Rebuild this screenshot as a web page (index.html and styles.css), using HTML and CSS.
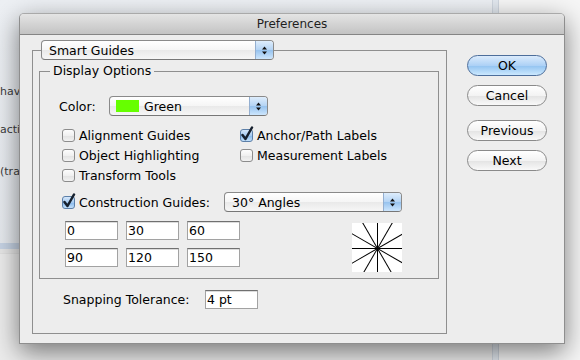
FILE: index.html
```html
<!DOCTYPE html>
<html lang="en">
  <head>
    <meta charset="UTF-8" />
    <meta name="viewport" content="width=device-width, initial-scale=1.0" />
    <title>Preferences</title>
    <link rel="stylesheet" href="styles.css">
  </head>
  <body>
    <div class="desktop">
      <div class="back-window">
        <p class="back-line line-1">havior</p>
        <p class="back-line line-2">active</p>
        <p class="back-line line-3">(transform)</p>
        <div class="back-band"></div>
        <div class="back-list"></div>
      </div>
      <div class="back-strip"></div>
      <div class="back-panel"></div>

      <div class="dialog">
        <div class="titlebar">Preferences</div>
        <div class="dialog-body">
          <fieldset class="group outer-group">
            <legend class="pane-legend">
              <div class="popup pane-popup">
                <span class="popup-text">Smart Guides</span>
                <span class="popup-arrows">
                  <svg width="7" height="11" viewBox="0 0 7 11"><path d="M3.5 1.5L6 4.5H1Z M3.5 9.5L6 6.5H1Z" /></svg>
                </span>
              </div>
            </legend>

            <fieldset class="group inner-group">
              <legend class="group-title">Display Options</legend>
              <div class="display-body">
                <div class="color-row">
                  <span class="field-label">Color:</span>
                  <div class="popup color-popup">
                    <span class="swatch"></span>
                    <span class="popup-text">Green</span>
                    <span class="popup-arrows">
                      <svg width="7" height="11" viewBox="0 0 7 11"><path d="M3.5 1.5L6 4.5H1Z M3.5 9.5L6 6.5H1Z" /></svg>
                    </span>
                  </div>
                </div>

                <div class="checks">
                  <label class="check"><span class="box"></span>Alignment Guides</label>
                  <label class="check"><span class="box checked"><svg class="tick" width="14" height="16" viewBox="0 0 14 16"><path d="M2.5 9L5.5 13L12 1.5" /></svg></span>Anchor/Path Labels</label>
                  <label class="check"><span class="box"></span>Object Highlighting</label>
                  <label class="check"><span class="box"></span>Measurement Labels</label>
                  <label class="check"><span class="box"></span>Transform Tools</label>
                </div>

                <div class="construction-row">
                  <label class="check construction-check"><span class="box checked"><svg class="tick" width="14" height="16" viewBox="0 0 14 16"><path d="M2.5 9L5.5 13L12 1.5" /></svg></span>Construction Guides:</label>
                  <div class="popup angle-popup">
                    <span class="popup-text">30° Angles</span>
                    <span class="popup-arrows">
                      <svg width="7" height="11" viewBox="0 0 7 11"><path d="M3.5 1.5L6 4.5H1Z M3.5 9.5L6 6.5H1Z" /></svg>
                    </span>
                  </div>
                </div>

                <div class="angles-row">
                  <div class="angle-fields">
                    <span class="text-field">0</span>
                    <span class="text-field">30</span>
                    <span class="text-field">60</span>
                    <span class="text-field">90</span>
                    <span class="text-field">120</span>
                    <span class="text-field">150</span>
                  </div>
                  <svg class="angle-preview" width="50" height="49" viewBox="0 0 50 49">
                    <rect width="50" height="49" fill="#fff" />
                    <g transform="translate(25.5 25.5)" stroke="#000" stroke-width="1">
                      <line x1="-40" y1="0" x2="40" y2="0" />
                      <line x1="0" y1="-40" x2="0" y2="40" />
                      <line x1="-40" y1="0" x2="40" y2="0" transform="rotate(30)" />
                      <line x1="-40" y1="0" x2="40" y2="0" transform="rotate(60)" />
                      <line x1="-40" y1="0" x2="40" y2="0" transform="rotate(120)" />
                      <line x1="-40" y1="0" x2="40" y2="0" transform="rotate(150)" />
                    </g>
                  </svg>
                </div>
              </div>
            </fieldset>

            <div class="snap-row">
              <span class="snap-label">Snapping Tolerance:</span>
              <span class="text-field">4 pt</span>
            </div>
          </fieldset>

          <div class="buttons">
            <div class="btn btn-default">OK</div>
            <div class="btn">Cancel</div>
            <div class="btn btn-gap">Previous</div>
            <div class="btn">Next</div>
          </div>
        </div>
      </div>
    </div>
  </body>
</html>
```

FILE: styles.css
```css
html,
body {
  font-family: "DejaVu Sans", Verdana, sans-serif;
}

body {
  margin: 0;
  font-size: 12.5px;
  color: #000;
  background: #e9edf2;
}

.desktop {
  position: relative;
  width: 580px;
  height: 360px;
  overflow: hidden;
}

/* windows behind the dialog */
.back-window {
  position: absolute;
  left: 0;
  top: 0;
  width: 492px;
  height: 360px;
  background: linear-gradient(#edf0f4, #e2e6eb);
}

.back-line {
  position: absolute;
  left: 0;
  margin: 0;
  font-size: 11px;
  color: #3c3c3c;
  white-space: nowrap;
}

.line-1 {
  top: 85px;
}

.line-2 {
  top: 123px;
}

.line-3 {
  top: 165px;
}

.back-band {
  position: absolute;
  left: 0;
  top: 243px;
  width: 100%;
  height: 6px;
  background: #c6d3e4;
}

.back-list {
  position: absolute;
  left: 0;
  top: 249px;
  width: 100%;
  height: 111px;
  border-top: 4px solid #e6e6e6;
  background: linear-gradient(#e0e0e0 0, #e0e0e0 1px, #ececec 1px);
}

.back-strip {
  position: absolute;
  left: 492px;
  top: 0;
  width: 5px;
  height: 360px;
  border-left: 1px solid #cfd6df;
  border-right: 1px solid #cfd6df;
  background: #e2e8ef;
}

.back-panel {
  position: absolute;
  left: 499px;
  top: 0;
  width: 81px;
  height: 360px;
  background: #f6f6f6;
}

/* dialog */
.dialog {
  position: absolute;
  left: 19px;
  top: 13px;
  width: 546px;
  height: 331px;
  box-sizing: border-box;
  border: 1px solid #8e8e8e;
  border-top-color: #a9a9a9;
  border-radius: 5px 5px 0 0;
  background: #ededed;
  box-shadow: 0 8px 26px rgba(0, 0, 0, 0.5);
}

.titlebar {
  height: 20px;
  line-height: 20px;
  border-bottom: 1px solid #858585;
  border-radius: 4px 4px 0 0;
  background: linear-gradient(#e4e4e4, #c3c3c3);
  text-align: center;
  font-size: 12px;
  color: #1e1e1e;
}

.dialog-body {
  display: flex;
  align-items: flex-start;
  padding: 5px 0 0 12px;
}

.group {
  margin: 0;
  padding: 0;
  min-width: 0;
  border: 1px solid #8f8f8f;
}

.outer-group {
  width: 415px;
  box-sizing: border-box;
  padding-bottom: 24px;
}

.pane-legend {
  margin-left: 8px;
  padding: 0;
}

.inner-group {
  width: 400px;
  box-sizing: border-box;
  margin: 3px 0 0 6px;
}

.group-title {
  margin-left: 10px;
  padding: 0 3px;
  line-height: 16px;
}

.display-body {
  padding: 17px 0 6px 19px;
}

/* popup menus */
.popup {
  display: flex;
  align-items: center;
  height: 20px;
  box-sizing: border-box;
  border: 1px solid #8a8a8a;
  border-bottom-color: #777;
  border-radius: 4px;
  background: linear-gradient(#ffffff, #f5f5f5 50%, #e9e9e9 51%, #f6f6f6);
  overflow: hidden;
}

.popup-text {
  flex: 1;
  padding-left: 7px;
  white-space: nowrap;
}

.popup-arrows {
  display: flex;
  align-items: center;
  justify-content: center;
  align-self: stretch;
  width: 17px;
  border-left: 1px solid #94afd0;
  background: linear-gradient(#deedfc, #b3d3f4 50%, #96c2ee 51%, #cde6fd);
}

.popup-arrows path {
  fill: #111;
}

.pane-popup {
  width: 233px;
}

.color-popup {
  width: 159px;
}

.angle-popup {
  width: 178px;
}

.swatch {
  width: 23px;
  height: 12px;
  margin-left: 6px;
  background: #66ff00;
}

.color-popup .popup-text {
  padding-left: 5px;
}

.color-row {
  display: flex;
  align-items: center;
}

.field-label {
  width: 50px;
}

/* checkboxes */
.checks {
  display: grid;
  grid-template-columns: 178px auto;
  grid-auto-rows: 20px;
  margin-top: 9px;
  padding-left: 3px;
}

.check {
  display: flex;
  align-items: center;
  gap: 4px;
  white-space: nowrap;
}

.box {
  position: relative;
  flex: none;
  width: 13px;
  height: 13px;
  box-sizing: border-box;
  border: 1px solid #8c8c8c;
  border-radius: 3px;
  background: linear-gradient(#fdfdfd, #f0f0f0 50%, #e2e2e2 51%, #f2f2f2);
}

.box.checked {
  border-color: #5c7fa8;
  background: linear-gradient(#d4e6fa, #a6cbf2 50%, #86b8ec 51%, #c2e0fb);
}

.tick {
  position: absolute;
  left: -1px;
  top: -4px;
}

.tick path {
  fill: none;
  stroke: #16202e;
  stroke-width: 2.5;
  stroke-linecap: round;
  stroke-linejoin: round;
}

.construction-row {
  display: flex;
  align-items: center;
  margin-top: 7px;
  padding-left: 3px;
}

.construction-check {
  width: 162px;
}

/* angle fields */
.angles-row {
  display: flex;
  justify-content: space-between;
  align-items: flex-start;
  width: 337px;
  margin-top: 9px;
  padding-left: 6px;
}

.angle-fields {
  display: grid;
  grid-template-columns: repeat(3, 53px);
  gap: 8px;
}

.text-field {
  display: block;
  height: 19px;
  box-sizing: border-box;
  padding-left: 1px;
  border: 1px solid #a2a2a2;
  border-top-color: #707070;
  background: #fff;
  box-shadow: inset 0 1px 0 #dcdcdc;
  line-height: 17px;
}

.angle-preview {
  display: block;
  margin-top: 2px;
}

.snap-row {
  display: flex;
  align-items: center;
  padding: 11px 0 0 30px;
}

.snap-label {
  width: 142px;
}

.snap-row .text-field {
  width: 53px;
}

/* buttons */
.buttons {
  display: flex;
  flex-direction: column;
  gap: 9px;
  width: 80px;
  margin: 15px 0 0 20px;
}

.btn {
  height: 21px;
  box-sizing: border-box;
  border: 1px solid #8a8a8a;
  border-radius: 11px;
  background: linear-gradient(#ffffff, #f3f3f3 50%, #e3e3e3 51%, #f9f9f9);
  text-align: center;
  line-height: 19px;
}

.btn-default {
  border-color: #4d6e9b;
  background: linear-gradient(#dbebfc, #add1f6 50%, #92c3f1 51%, #cbe8fe);
}

.btn-gap {
  margin-top: 5px;
}
```
